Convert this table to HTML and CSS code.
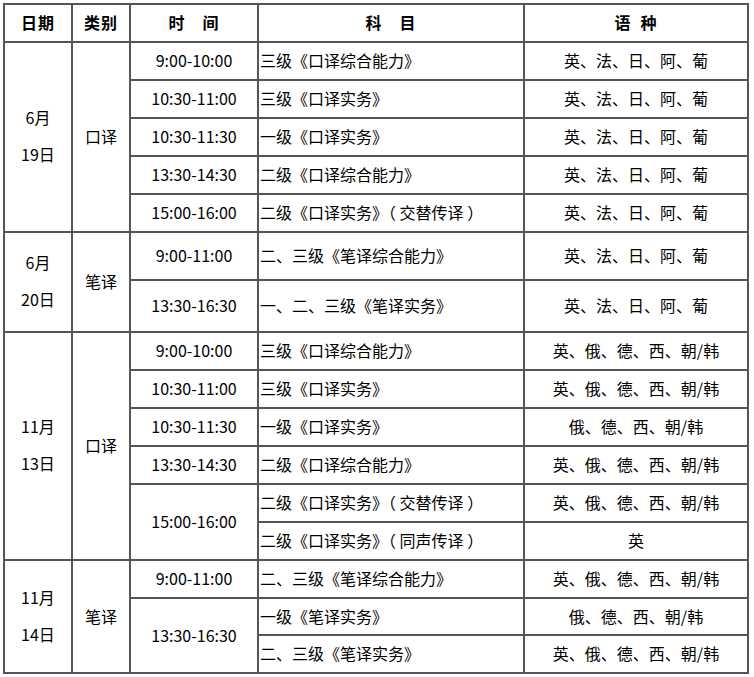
FILE: index.html
```html
<!DOCTYPE html>
<html lang="zh-CN">
<head>
<meta charset="utf-8">
<title>考试日程</title>
<link rel="stylesheet" href="styles.css">
</head>
<body>
<div class="sched">
  <div class="c hd">日期</div>
  <div class="c hd">类别</div>
  <div class="c hd">时　间</div>
  <div class="c hd">科　目</div>
  <div class="c hd">语&ensp;种</div>

  <div class="c date r2-6">6月<br>19日</div>
  <div class="c r2-6 k">口译</div>
  <div class="c">9:00-10:00</div>
  <div class="c s">三级《口译综合能力》</div>
  <div class="c">英、法、日、阿、葡</div>
  <div class="c">10:30-11:00</div>
  <div class="c s">三级《口译实务》</div>
  <div class="c">英、法、日、阿、葡</div>
  <div class="c">10:30-11:30</div>
  <div class="c s">一级《口译实务》</div>
  <div class="c">英、法、日、阿、葡</div>
  <div class="c">13:30-14:30</div>
  <div class="c s">二级《口译综合能力》</div>
  <div class="c">英、法、日、阿、葡</div>
  <div class="c">15:00-16:00</div>
  <div class="c s">二级《口译实务》（ 交替传译 ）</div>
  <div class="c">英、法、日、阿、葡</div>

  <div class="c date r7-8">6月<br>20日</div>
  <div class="c r7-8 k">笔译</div>
  <div class="c">9:00-11:00</div>
  <div class="c s">二、三级《笔译综合能力》</div>
  <div class="c">英、法、日、阿、葡</div>
  <div class="c">13:30-16:30</div>
  <div class="c s">一、二、三级《笔译实务》</div>
  <div class="c">英、法、日、阿、葡</div>

  <div class="c date r9-14">11月<br>13日</div>
  <div class="c r9-14 k">口译</div>
  <div class="c">9:00-10:00</div>
  <div class="c s">三级《口译综合能力》</div>
  <div class="c">英、俄、德、西、朝/韩</div>
  <div class="c">10:30-11:00</div>
  <div class="c s">三级《口译实务》</div>
  <div class="c">英、俄、德、西、朝/韩</div>
  <div class="c">10:30-11:30</div>
  <div class="c s">一级《口译实务》</div>
  <div class="c">俄、德、西、朝/韩</div>
  <div class="c">13:30-14:30</div>
  <div class="c s">二级《口译综合能力》</div>
  <div class="c">英、俄、德、西、朝/韩</div>
  <div class="c span2">15:00-16:00</div>
  <div class="c s">二级《口译实务》（ 交替传译 ）</div>
  <div class="c">英、俄、德、西、朝/韩</div>
  <div class="c s">二级《口译实务》（ 同声传译 ）</div>
  <div class="c">英</div>

  <div class="c date r15-17">11月<br>14日</div>
  <div class="c r15-17 k">笔译</div>
  <div class="c">9:00-11:00</div>
  <div class="c s">二、三级《笔译综合能力》</div>
  <div class="c">英、俄、德、西、朝/韩</div>
  <div class="c span2">13:30-16:30</div>
  <div class="c s">一级《笔译实务》</div>
  <div class="c">俄、德、西、朝/韩</div>
  <div class="c s">二、三级《笔译实务》</div>
  <div class="c">英、俄、德、西、朝/韩</div>
</div>
</body>
</html>
```

FILE: styles.css
```css
html, body {
  background: #fff;
}
body {
  margin: 3px;
  font-family: "Noto Sans CJK SC", "Noto Sans", sans-serif;
  font-size: 16px;
  color: #000;
}
.sched {
  display: grid;
  width: 746px;
  box-sizing: border-box;
  grid-template-columns: 68px 58px 128px 266px 224px;
  grid-template-rows:
    38px
    38px 38px 38px 38px 38px
    48px 52px
    38px 38px 38px 38px 38px 38px
    38px 37px 38px;
  border-top: 2px solid #555;
  border-left: 2px solid #555;
}
.c {
  box-sizing: border-box;
  border-right: 2px solid #555;
  border-bottom: 2px solid #555;
  padding-bottom: 2px;
  display: flex;
  align-items: center;
  justify-content: center;
  text-align: center;
  line-height: 20px;
  white-space: nowrap;
}
.hd {
  font-weight: bold;
  letter-spacing: 1px;
}
.s {
  justify-content: flex-start;
  text-align: left;
  padding-left: 1px;
}
.date {
  line-height: 37px;
  grid-column: 1;
}
.k {
  grid-column: 2;
}
.r2-6 { grid-row: 2 / 7; }
.r7-8 { grid-row: 7 / 9; }
.r9-14 { grid-row: 9 / 15; }
.r15-17 { grid-row: 15 / 18; }
.span2 { grid-row: span 2; }
```
